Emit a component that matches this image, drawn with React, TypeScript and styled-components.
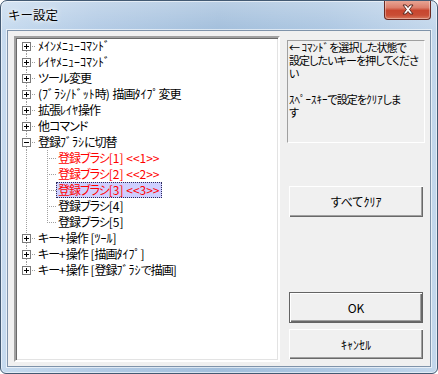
import React from "react";
import styled, { createGlobalStyle } from "styled-components";

const GlobalStyle = createGlobalStyle`
  html, body {
    margin: 0;
    padding: 0;
    background: #ffffff;
  }
  body {
    font-family: "Noto Sans CJK JP", sans-serif;
    font-size: 12px;
  }
`;

const Window = styled.div`
  width: 438px;
  height: 374px;
  box-sizing: border-box;
  display: flex;
  flex-direction: column;
  border: 1px solid #435a73;
  border-radius: 7px 7px 6px 6px;
  background:
    linear-gradient(180deg, rgba(255, 255, 255, 0.25) 0%, rgba(255, 255, 255, 0) 30px),
    linear-gradient(90deg, #c7dbef 0%, #b3cbe5 22%, #a3bfdc 50%, #adc7e2 75%, #c3d7ec 100%);
  box-shadow: inset 0 0 0 1px rgba(255, 255, 255, 0.55);
  overflow: hidden;
`;

const TitleBar = styled.div`
  height: 29px;
  flex: none;
  display: flex;
  align-items: flex-start;
  padding-left: 7px;
`;

const Title = styled.div`
  font-family: "Noto Sans CJK JP", sans-serif;
  font-size: 12.5px;
  line-height: 16px;
  margin-top: 6px;
  color: #000;
  text-shadow: 0 0 6px #ffffff, 0 0 3px #ffffff;
`;

const CloseButton = styled.div`
  margin-left: auto;
  margin-right: 6px;
  margin-top: -1px;
  width: 47px;
  height: 20px;
  box-sizing: border-box;
  border: 1px solid #6b2a22;
  border-top: none;
  border-radius: 0 0 4px 4px;
  background: linear-gradient(180deg, #e9a999 0%, #dc7f6c 40%, #c8462f 55%, #c94d35 80%, #d97a5f 100%);
  box-shadow: inset 0 0 0 1px rgba(255, 255, 255, 0.35);
  display: flex;
  align-items: center;
  justify-content: center;
`;

const Client = styled.div`
  flex: 1;
  margin: 0 6px 6px 6px;
  border: 1px solid #7f93aa;
  box-shadow: 0 0 0 1px rgba(255, 255, 255, 0.6);
  background: #f0f0f0;
  display: flex;
  gap: 7px;
  padding: 5px 5px 4px 6px;
  min-height: 0;
`;

const TreeBox = styled.div`
  width: 266px;
  flex: none;
  box-sizing: border-box;
  background: #ffffff;
  border-style: solid;
  border-width: 2px;
  border-color: #a0a0a0 #ffffff #ffffff #a0a0a0;
  box-shadow: inset 1px 1px 0 #696969, inset -1px -1px 0 #e3e3e3;
  overflow: hidden;
`;

const Row = styled.div`
  display: flex;
  align-items: center;
  height: 16px;
`;

const Gutter = styled.svg`
  flex: none;
  display: block;
`;

// fullwidth kana get proportional widths; halfwidth kana and ascii keep their own
const Half = styled.span`
  font-feature-settings: normal;
  letter-spacing: 0;
`;

const Label = styled.span<{ $red?: boolean; $selected?: boolean }>`
  display: block;
  height: 16px;
  box-sizing: border-box;
  padding: 0 2px;
  line-height: 16px;
  white-space: nowrap;
  font-size: 12px;
  font-feature-settings: "palt";
  letter-spacing: -1px;
  color: ${({ $red }) => ($red ? "#ff0000" : "#000000")};
  background: ${({ $selected }) => ($selected ? "#cfcfff" : "transparent")};
  outline: ${({ $selected }) => ($selected ? "1px dotted #2a2a5a" : "none")};
  outline-offset: -1px;
`;

const RightColumn = styled.div`
  width: 138px;
  flex: none;
  min-width: 0;
  display: flex;
  flex-direction: column;
`;

const InfoBox = styled.div`
  margin-top: 4px;
  height: 103px;
  box-sizing: border-box;
  border-style: solid;
  border-width: 1px;
  border-color: #a0a0a0 #ffffff #ffffff #a0a0a0;
  padding: 0 0 0 1px;
  font-size: 11px;
  line-height: 13px;
  white-space: pre;
  font-feature-settings: "palt";
  letter-spacing: -0.9px;
  overflow: hidden;
  color: #000;
`;

const Button = styled.div<{ $default?: boolean; $top?: string; $height?: number; $bottom?: number }>`
  margin: ${({ $top }) => $top ?? "0"} 2px ${({ $bottom }) => $bottom ?? 0}px 2px;
  height: ${({ $height }) => $height ?? 31}px;
  flex: none;
  box-sizing: border-box;
  display: flex;
  align-items: center;
  justify-content: center;
  font-size: 12px;
  font-feature-settings: "palt";
  color: #000;
  background: #f0f0f0;
  border: ${({ $default }) => ($default ? "1px solid #646464" : "none")};
  box-shadow: inset 1px 1px 0 #ffffff, inset -1px -1px 0 #696969, inset -2px -2px 0 #a0a0a0;
`;

const dash = "1 1";
const LINE = "#a0a0a0";

const Jp: React.FC<{ text: string }> = ({ text }) => (
  <>
    {text.split(/([\uFF61-\uFF9F\x20-\x7E]+)/).map((part, i) =>
      i % 2 ? <Half key={i}>{part}</Half> : <React.Fragment key={i}>{part}</React.Fragment>
    )}
  </>
);

type TreeNode = {
  label: string;
  red?: boolean;
  selected?: boolean;
  children?: TreeNode[];
};

const nodes: TreeNode[] = [
  { label: "ﾒｲﾝﾒﾆｭｰｺﾏﾝﾄﾞ", children: [] },
  { label: "ﾚｲﾔﾒﾆｭｰｺﾏﾝﾄﾞ", children: [] },
  { label: "ツール変更", children: [] },
  { label: "(ﾌﾞﾗｼ/ﾄﾞｯﾄ時) 描画ﾀｲﾌﾟ変更", children: [] },
  { label: "拡張ﾚｲﾔ操作", children: [] },
  { label: "他コマンド", children: [] },
  {
    label: "登録ﾌﾞﾗｼに切替",
    children: [
      { label: "登録ブラシ[1] <<1>>", red: true },
      { label: "登録ブラシ[2] <<2>>", red: true },
      { label: "登録ブラシ[3] <<3>>", red: true, selected: true },
      { label: "登録ブラシ[4]" },
      { label: "登録ブラシ[5]" },
    ],
  },
  { label: "キー+操作 [ﾂｰﾙ]", children: [] },
  { label: "キー+操作 [描画ﾀｲﾌﾟ]", children: [] },
  { label: "キー+操作 [登録ﾌﾞﾗｼで描画]", children: [] },
];

const ExpandBox: React.FC<{ open: boolean }> = ({ open }) => (
  <g shapeRendering="crispEdges">
    <rect x={6.5} y={4.5} width={8} height={8} fill="#ffffff" stroke="#7a7a7a" />
    <line x1={8} x2={13} y1={8.5} y2={8.5} stroke="#000" />
    {!open && <line x1={10.5} x2={10.5} y1={6} y2={11} stroke="#000" />}
  </g>
);

const RootGutter: React.FC<{ first: boolean; last: boolean; open: boolean }> = ({ first, last, open }) => (
  <Gutter width={20} height={16}>
    <g shapeRendering="crispEdges" stroke={LINE} strokeDasharray={dash}>
      {!first && <line x1={10.5} x2={10.5} y1={0} y2={4} />}
      {!last && <line x1={10.5} x2={10.5} y1={13} y2={16} />}
      <line x1={16} x2={20} y1={8.5} y2={8.5} />
    </g>
    <ExpandBox open={open} />
  </Gutter>
);

const ChildGutter: React.FC<{ last: boolean }> = ({ last }) => (
  <>
    <Gutter width={20} height={16}>
      <line x1={10.5} x2={10.5} y1={0} y2={16} stroke={LINE} strokeDasharray={dash} shapeRendering="crispEdges" />
    </Gutter>
    <Gutter width={20} height={16}>
      <g shapeRendering="crispEdges" stroke={LINE} strokeDasharray={dash}>
        <line x1={11.5} x2={11.5} y1={0} y2={last ? 9 : 16} />
        <line x1={13} x2={20} y1={8.5} y2={8.5} />
      </g>
    </Gutter>
  </>
);

const KeyTree: React.FC = () => (
  <TreeBox>
    {nodes.map((n, i) => {
      const open = (n.children?.length ?? 0) > 0;
      return (
        <React.Fragment key={n.label}>
          <Row>
            <RootGutter first={i === 0} last={i === nodes.length - 1} open={open} />
            <Label>
              <Jp text={n.label} />
            </Label>
          </Row>
          {n.children?.map((c, j) => (
            <Row key={c.label}>
              <ChildGutter last={j === n.children!.length - 1} />
              <Label $red={c.red} $selected={c.selected}>
                <Jp text={c.label} />
              </Label>
            </Row>
          ))}
        </React.Fragment>
      );
    })}
  </TreeBox>
);

const CloseGlyph: React.FC = () => (
  <svg width="14" height="11" viewBox="0 0 14 11">
    <path
      d="M2 1 L5 1 L7 3.5 L9 1 L12 1 L8.6 5.5 L12 10 L9 10 L7 7.5 L5 10 L2 10 L5.4 5.5 Z"
      fill="#ffffff"
      stroke="#5a2a22"
      strokeWidth="1"
      strokeLinejoin="round"
    />
  </svg>
);

const infoText = "← ｺﾏﾝﾄﾞを選択した状態で\n設定したいキーを押してくださ\nい\n\nｽﾍﾟｰｽｷｰで設定をｸﾘｱしま\nす";

export default function App() {
  return (
    <>
      <GlobalStyle />
      <Window>
        <TitleBar>
          <Title>キー設定</Title>
          <CloseButton>
            <CloseGlyph />
          </CloseButton>
        </TitleBar>
        <Client>
          <KeyTree />
          <RightColumn>
            <InfoBox>
              <Jp text={infoText} />
            </InfoBox>
            <Button $top="43px">
              <Jp text="すべてｸﾘｱ" />
            </Button>
            <Button $default $top="auto">
              OK
            </Button>
            <Button $top="6px" $height={30} $bottom={3}>
              <Jp text="ｷｬﾝｾﾙ" />
            </Button>
          </RightColumn>
        </Client>
      </Window>
    </>
  );
}
